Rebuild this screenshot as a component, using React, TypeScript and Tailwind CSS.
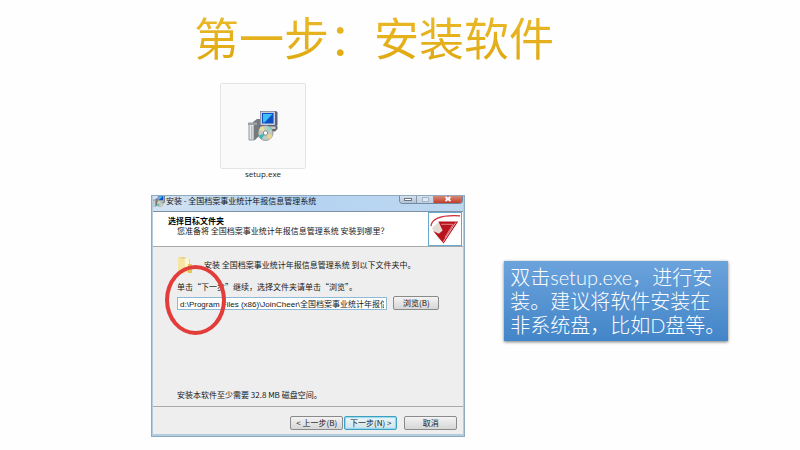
import type { ReactNode } from 'react'

function SetupIcon({ className }: { className: string }) {
  return (
    <svg viewBox="0 0 30 30" className={className} aria-hidden>
      <path d="M5 11 9 8h3v16l-5 5H5z" fill="#74797d" />
      <path d="M1 13h5v16H1z" fill="#e6e8ea" stroke="#7c8185" strokeWidth=".8" />
      <path d="M0 11.500h9V14H0z" fill="#9da1a5" />
      <path d="M3 15h1.500v13H3z" fill="#b9bdc0" />
      <path d="M12 0h16l1.500 1.500V14L28 15.500H12z" fill="#5c6478" />
      <path d="M12.500 .500h14.500V14H12.500z" fill="#c9cbd8" />
      <path d="M14 2h11.500v10.500H14z" fill="#0d4fc4" />
      <path d="M15 3h9.500l-8 8.500H15z" fill="#3fc0f5" />
      <path d="M11 15h18.500v3l-2.500 2.500H11z" fill="#66696d" />
      <path d="M12 15.500h15.500v2.500H12z" fill="#c9cac8" />
      <circle cx="17.500" cy="22" r="7.500" fill="#c3c9c5" stroke="#7b807f" strokeWidth=".7" />
      <path d="M17.500 22 11 18.500a7.500 7.500 0 0 1 4-3.500z" fill="#eadf9a" />
      <path d="M17.500 22 20.500 15.200a7.500 7.500 0 0 1 3.500 3z" fill="#8ed6c4" />
      <path d="M17.500 22 24.500 24.500a7.500 7.500 0 0 1-3.500 4z" fill="#e6d98a" />
      <path d="M17.500 22 13.500 28.300a7.500 7.500 0 0 1-3-3.800z" fill="#3fb9b6" />
      <circle cx="17.500" cy="22" r="2.200" fill="#fff" stroke="#6f7376" strokeWidth=".8" />
    </svg>
  )
}

function VendorLogo() {
  return (
    <svg viewBox="0 0 34 34" className="h-full w-full" aria-hidden>
      <path d="M2 14C3 6 14 2 33 3" fill="none" stroke="#cf2a32" strokeWidth="1.300" />
      <path d="M3 16 10 10l4-1 4 6-2 17-6-5z" fill="#e4dbd3" />
      <path d="M10 9h21L15.500 32.500 4.500 19l6 3 4-3.500z" fill="#b9131d" />
      <path d="M13 12h12.500l-8.500 14" fill="none" stroke="#e9a3a5" strokeWidth=".9" />
      <path d="M28.500 10 14.800 31" stroke="#f6dede" strokeWidth=".8" />
    </svg>
  )
}

function FolderIcon() {
  return (
    <svg viewBox="0 0 16 18" className="h-[18px] w-4 shrink-0" aria-hidden>
      <path d="M2 1h6l1 2h4v13H2z" fill="#ecd58a" />
      <path d="M7 3h5v12H7z" fill="#fff6d2" />
      <path d="M11 8h4v9h-4z" fill="#e3c565" />
      <path d="M1 1l7 3v14l-7-2z" fill="#f6e6a6" />
    </svg>
  )
}

function WindowControls() {
  return (
    <div className="flex h-[9px] overflow-hidden rounded-b-sm border border-t-0 border-[#7488a0]">
      <button
        type="button"
        aria-label="最小化"
        className="flex w-[17px] items-center justify-center border-r border-[#8597ad] bg-linear-to-b from-[#dbe5f0] to-[#b1c2d6]"
      >
        <span className="h-[3px] w-2 border border-[#6b7480] bg-white" />
      </button>
      <button
        type="button"
        aria-label="最大化"
        disabled
        className="flex w-[17px] items-center justify-center border-r border-[#8597ad] bg-linear-to-b from-[#d6e2f0] to-[#bdcfe3]"
      >
        <span className="h-[5px] w-[7px] border border-[#a6b4c5] bg-[#e1e9f2]" />
      </button>
      <button
        type="button"
        aria-label="关闭"
        className="flex w-[28px] items-center justify-center bg-linear-to-b from-[#db9283] to-[#bf3b27]"
      >
        <svg viewBox="0 0 8 6" className="h-[6px] w-2" aria-hidden>
          <path d="M1.500 1 6.500 5M6.500 1 1.500 5" stroke="#fff" strokeWidth="1.700" />
        </svg>
      </button>
    </div>
  )
}

type DialogButtonProps = {
  children: ReactNode
  primary?: boolean
  narrow?: boolean
}

function DialogButton({ children, primary = false, narrow = false }: DialogButtonProps) {
  const width = narrow ? 'w-[46px]' : 'w-[53px]'
  const tone = primary
    ? 'border-[#3f9fbe] bg-linear-to-b from-[#eef7fa] to-[#cfe3ec] shadow-[inset_0_0_1px_1px_#8fd8ee]'
    : 'border-[#8a8a8a] bg-linear-to-b from-[#f3f3f3] to-[#d6d6d6]'

  return (
    <button
      type="button"
      className={`flex h-[14px] shrink-0 items-center justify-center whitespace-nowrap rounded-xs border text-[8px] leading-3 ${width} ${tone}`}
    >
      {children}
    </button>
  )
}

function InstallerWindow() {
  return (
    <section
      aria-label="安装程序"
      className="border-x-2 border-b-[3px] border-[#b4cce0] bg-[#eeeeee] font-['Noto_Sans_CJK_SC',sans-serif] text-[8px] leading-3 text-[#161616] outline-1 -outline-offset-1 outline-[#8fa9bd]"
    >
      <header className="flex h-4 items-start justify-between bg-linear-to-r from-[#d3e3f3] via-[#b5d3f2] to-[#bdd7ef]">
        <div className="flex items-center gap-px whitespace-nowrap">
          <SetupIcon className="h-3 w-3" />
          <span>安装 - 全国档案事业统计年报信息管理系统</span>
        </div>
        <WindowControls />
      </header>

      <div className="flex h-9 justify-between border-b border-[#a9a9a9] border-t border-t-[#7f90a3] bg-white">
        <div className="whitespace-nowrap pl-[15px] pt-1">
          <h2 className="leading-[10px] font-bold text-black">选择目标文件夹</h2>
          <p className="pl-[9px] leading-[10px]">您准备将 全国档案事业统计年报信息管理系统 安装到哪里？</p>
        </div>
        <div className="mr-px h-[34px] w-[34px] shrink-0 border border-[#67a8cd] bg-white">
          <VendorLogo />
        </div>
      </div>

      <div className="px-6 pt-[9px]">
        <div className="flex items-center gap-[11px] whitespace-nowrap">
          <FolderIcon />
          <p>安装 全国档案事业统计年报信息管理系统 到以下文件夹中。</p>
        </div>
        <label htmlFor="target-folder" className="mt-[7px] block">
          单击“下一步”继续，选择文件夹请单击“浏览”。
        </label>
        <div className="relative mt-[3px] flex items-center gap-[6px]">
          <input
            id="target-folder"
            type="text"
            defaultValue="d:\Program Files (x86)\JoinCheer\全国档案事业统计年报信息管理系统"
            className="h-[13px] min-w-0 flex-1 border border-[#8ebad8] bg-white px-[2px] font-['Liberation_Sans','Noto_Sans_CJK_SC',sans-serif] text-[8px] leading-3"
          />
          <DialogButton narrow>浏览(B)</DialogButton>
          <span className="pointer-events-none absolute -top-[31px] -left-3 h-[70px] w-[61px] rounded-[50%] border-4 border-[#e33d3b]" />
        </div>
      </div>

      <p className="mt-[79px] px-6">安装本软件至少需要 32.8 MB 磁盘空间。</p>

      <footer className="mt-[5px] flex justify-end border-t border-[#a9a9a9] pt-[9px] pr-[6px] pb-1">
        <div className="mr-[7px] flex gap-px">
          <DialogButton>&lt; 上一步(B)</DialogButton>
          <DialogButton primary>下一步(N) &gt;</DialogButton>
        </div>
        <DialogButton>取消</DialogButton>
      </footer>
    </section>
  )
}

export default function App() {
  return (
    <main
      lang="zh-CN"
      className="min-h-screen bg-[#fefefe] font-['Liberation_Sans','Noto_Sans_CJK_SC',sans-serif]"
    >
      <h1 className="mr-[6.5%] bg-linear-to-b from-[#eebf2c] to-[#dda60c] bg-clip-text pt-[14px] text-center text-[45px] leading-[54px] font-normal text-transparent">
        第一步：安装软件
      </h1>

      <div className="flex items-start pt-[15px] pl-[19%]">
        <div className="-ml-px w-[48.5%] shrink-0">
          <figure className="ml-[69px] w-[86px]">
            <div className="flex h-[86px] items-center justify-center rounded-xs border border-[#e4e4e4] bg-[#fafafa]">
              <SetupIcon className="h-[30px] w-[30px]" />
            </div>
            <figcaption className="pb-4 text-center font-['Open_Sans',sans-serif] text-[8px] leading-[10px] text-[#222222]">
              setup.exe
            </figcaption>
          </figure>
          <InstallerWindow />
        </div>

        <aside className="mt-[178px] ml-[6%] w-[34.5%] shrink-0 bg-linear-to-b from-[#6ba3dc] to-[#4285c8] py-1 pl-[6px] font-['Lato','Noto_Sans_CJK_SC',sans-serif] text-xl leading-6 font-light text-white shadow-[0_1px_3px_#777777]">
          双击setup.exe，进行安装。建议将软件安装在非系统盘，比如D盘等。
        </aside>
      </div>
    </main>
  )
}
